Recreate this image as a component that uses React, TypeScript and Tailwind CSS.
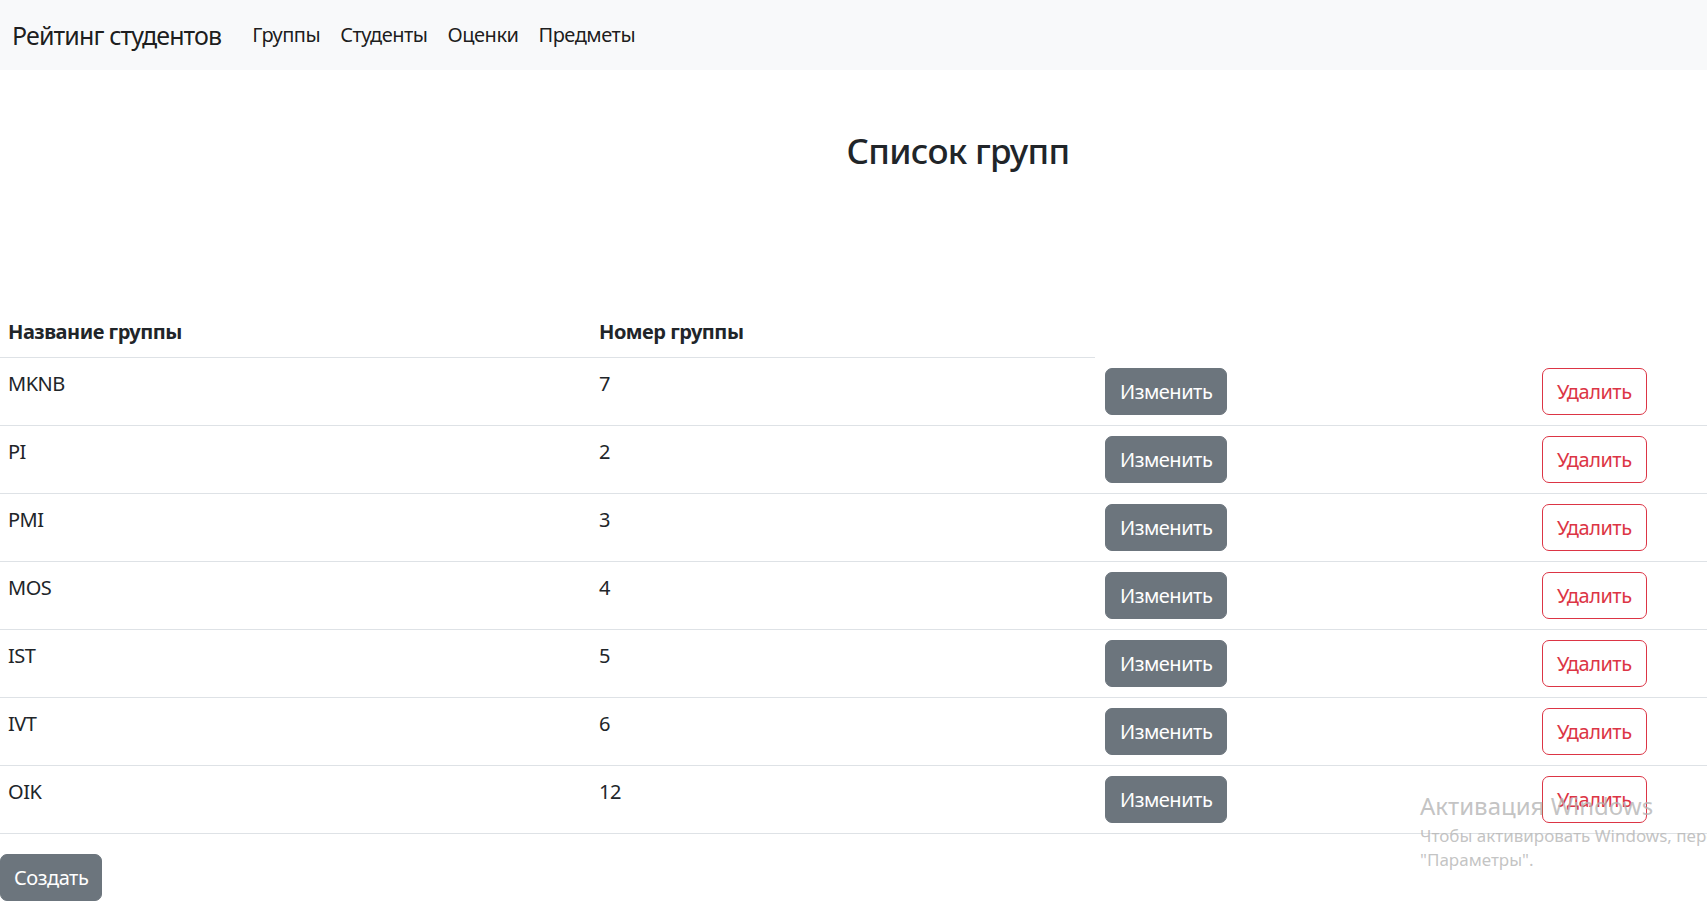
import React from 'react'

const FONT = { fontFamily: '"Noto Sans", "Open Sans", sans-serif' }

const GROUPS: { name: string; number: number }[] = [
  { name: 'MKNB', number: 7 },
  { name: 'PI', number: 2 },
  { name: 'PMI', number: 3 },
  { name: 'MOS', number: 4 },
  { name: 'IST', number: 5 },
  { name: 'IVT', number: 6 },
  { name: 'OIK', number: 12 },
]

const NAV = ['Группы', 'Студенты', 'Оценки', 'Предметы']

const COLS = 'grid grid-cols-[591px_504px_437px_1fr]'

export default function App() {
  return (
    <div
      className="relative min-h-screen overflow-hidden bg-white tracking-[-0.03em] text-[#212529]"
      style={FONT}
    >
      {/* Навбар */}
      <nav className="flex h-[70px] items-center bg-[#f8f9fa] pl-[12px]">
        <span className="mr-[21px] text-[25px] leading-[37px] tracking-[-0.035em] text-black/90">
          Рейтинг студентов
        </span>
        <ul className="flex">
          {NAV.map((n) => (
            <li key={n}>
              <a className="block px-[10px] text-[20px] leading-[30px] text-black/90">{n}</a>
            </li>
          ))}
        </ul>
      </nav>

      <div className="mt-[60px] flex justify-center pl-[209px]">
        <h2 className="text-[35px] font-medium leading-[42px] tracking-[-0.02em]">Список групп</h2>
      </div>

      {/* Таблица */}
      <div className="mt-[135px] text-[20px] leading-[30px]">
        <div className={COLS}>
          <div className="border-b border-[#dee2e6] px-[8px] py-[10px] font-bold">Название группы</div>
          <div className="border-b border-[#dee2e6] px-[8px] py-[10px] font-bold">Номер группы</div>
        </div>
        {GROUPS.map((g) => (
          <div key={g.name} className={`${COLS} border-b border-[#dee2e6]`}>
            <div className="px-[8px] py-[11px]">{g.name}</div>
            <div className="px-[8px] py-[11px]">{g.number}</div>
            <div className="py-[10px] pl-[10px]">
              <button className="h-[47px] rounded-[7px] border border-[#6c757d] bg-[#6c757d] px-[14px] text-white">
                Изменить
              </button>
            </div>
            <div className="py-[10px] pl-[10px]">
              <button className="h-[47px] rounded-[7px] border border-[#dc3545] bg-white px-[14px] text-[#dc3545]">
                Удалить
              </button>
            </div>
          </div>
        ))}
      </div>

      <button className="mt-[20px] h-[47px] rounded-[7px] border border-[#6c757d] bg-[#6c757d] px-[13px] text-[20px] leading-[30px] text-white">
        Создать
      </button>

      {/* Водяной знак активации Windows */}
      <div className="pointer-events-none absolute left-[1420px] top-[788px] whitespace-nowrap tracking-normal text-[#b4b4b4]/80">
        <div className="text-[24px] leading-[36px]">Активация Windows</div>
        <div className="text-[17px] leading-[24px]">Чтобы активировать Windows, перейдите в раздел</div>
        <div className="text-[17px] leading-[24px]">"Параметры".</div>
      </div>
    </div>
  )
}
